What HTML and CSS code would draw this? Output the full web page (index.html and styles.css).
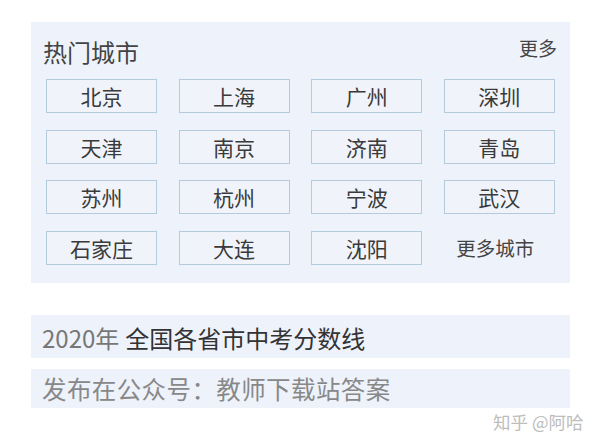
FILE: index.html
```html
<!DOCTYPE html>
<html lang="zh">
<head>
<meta charset="utf-8">
<link rel="stylesheet" href="styles.css">
</head>
<body>
<div class="page">
  <section class="panel">
    <div class="head">
      <span class="title">热门城市</span>
      <span class="more">更多</span>
    </div>
    <div class="grid">
      <div class="city">北京</div>
      <div class="city">上海</div>
      <div class="city">广州</div>
      <div class="city">深圳</div>
      <div class="city">天津</div>
      <div class="city">南京</div>
      <div class="city">济南</div>
      <div class="city">青岛</div>
      <div class="city">苏州</div>
      <div class="city">杭州</div>
      <div class="city">宁波</div>
      <div class="city">武汉</div>
      <div class="city">石家庄</div>
      <div class="city">大连</div>
      <div class="city">沈阳</div>
      <div class="city plain">更多城市</div>
    </div>
  </section>
  <div class="band band-title"><span class="year">2020年</span> 全国各省市中考分数线</div>
  <div class="band band-note">发布在公众号：教师下载站答案</div>
</div>
<div class="watermark">知乎 @阿哈</div>
</body>
</html>
```
FILE: styles.css
```css
html, body {
  margin: 0;
  padding: 0;
  background: #ffffff;
}
body {
  width: 600px;
  height: 447px;
  position: relative;
  overflow: hidden;
  font-family: "Noto Sans CJK SC", "Noto Sans", sans-serif;
}
.page {
  padding: 22px 30px 0 31px;
  display: flex;
  flex-direction: column;
}
.panel {
  background: #eef3fb;
  padding: 14px 15px 18px 15px;
}
.head {
  display: flex;
  justify-content: space-between;
  align-items: flex-start;
  margin-bottom: 11px;
}
.title {
  font-size: 24px;
  line-height: 32px;
  color: #444444;
  margin-left: -3px;
}
.more {
  font-size: 19px;
  line-height: 24px;
  color: #444444;
  margin-right: -2px;
}
.grid {
  display: grid;
  grid-template-columns: repeat(4, 111px);
  column-gap: 21.6px;
  row-gap: 16.6px;
}
.city {
  height: 34px;
  box-sizing: border-box;
  border: 1.5px solid #b4cadd;
  background: #f0f4fa;
  display: flex;
  align-items: center;
  justify-content: center;
  font-size: 21px;
  color: #3a3a3a;
}
.city.plain {
  border-color: transparent;
  background: transparent;
  font-size: 19.5px;
  color: #444444;
  padding-right: 8px;
}
.band {
  background: #eef2fb;
  padding-left: 11px;
  display: flex;
  align-items: center;
}
.band-title {
  margin-top: 32px;
  height: 43px;
  padding-top: 2px;
  box-sizing: border-box;
  font-size: 24px;
  color: #333333;
}
.band-title .year {
  color: #777777;
  margin-right: 6px;
}
.band-note {
  margin-top: 11px;
  height: 39px;
  font-size: 24.5px;
  letter-spacing: 0.4px;
  color: #888888;
}
.watermark {
  position: absolute;
  left: 493px;
  top: 410px;
  font-size: 17.5px;
  line-height: 24px;
  color: #bdbdbd;
}
```
